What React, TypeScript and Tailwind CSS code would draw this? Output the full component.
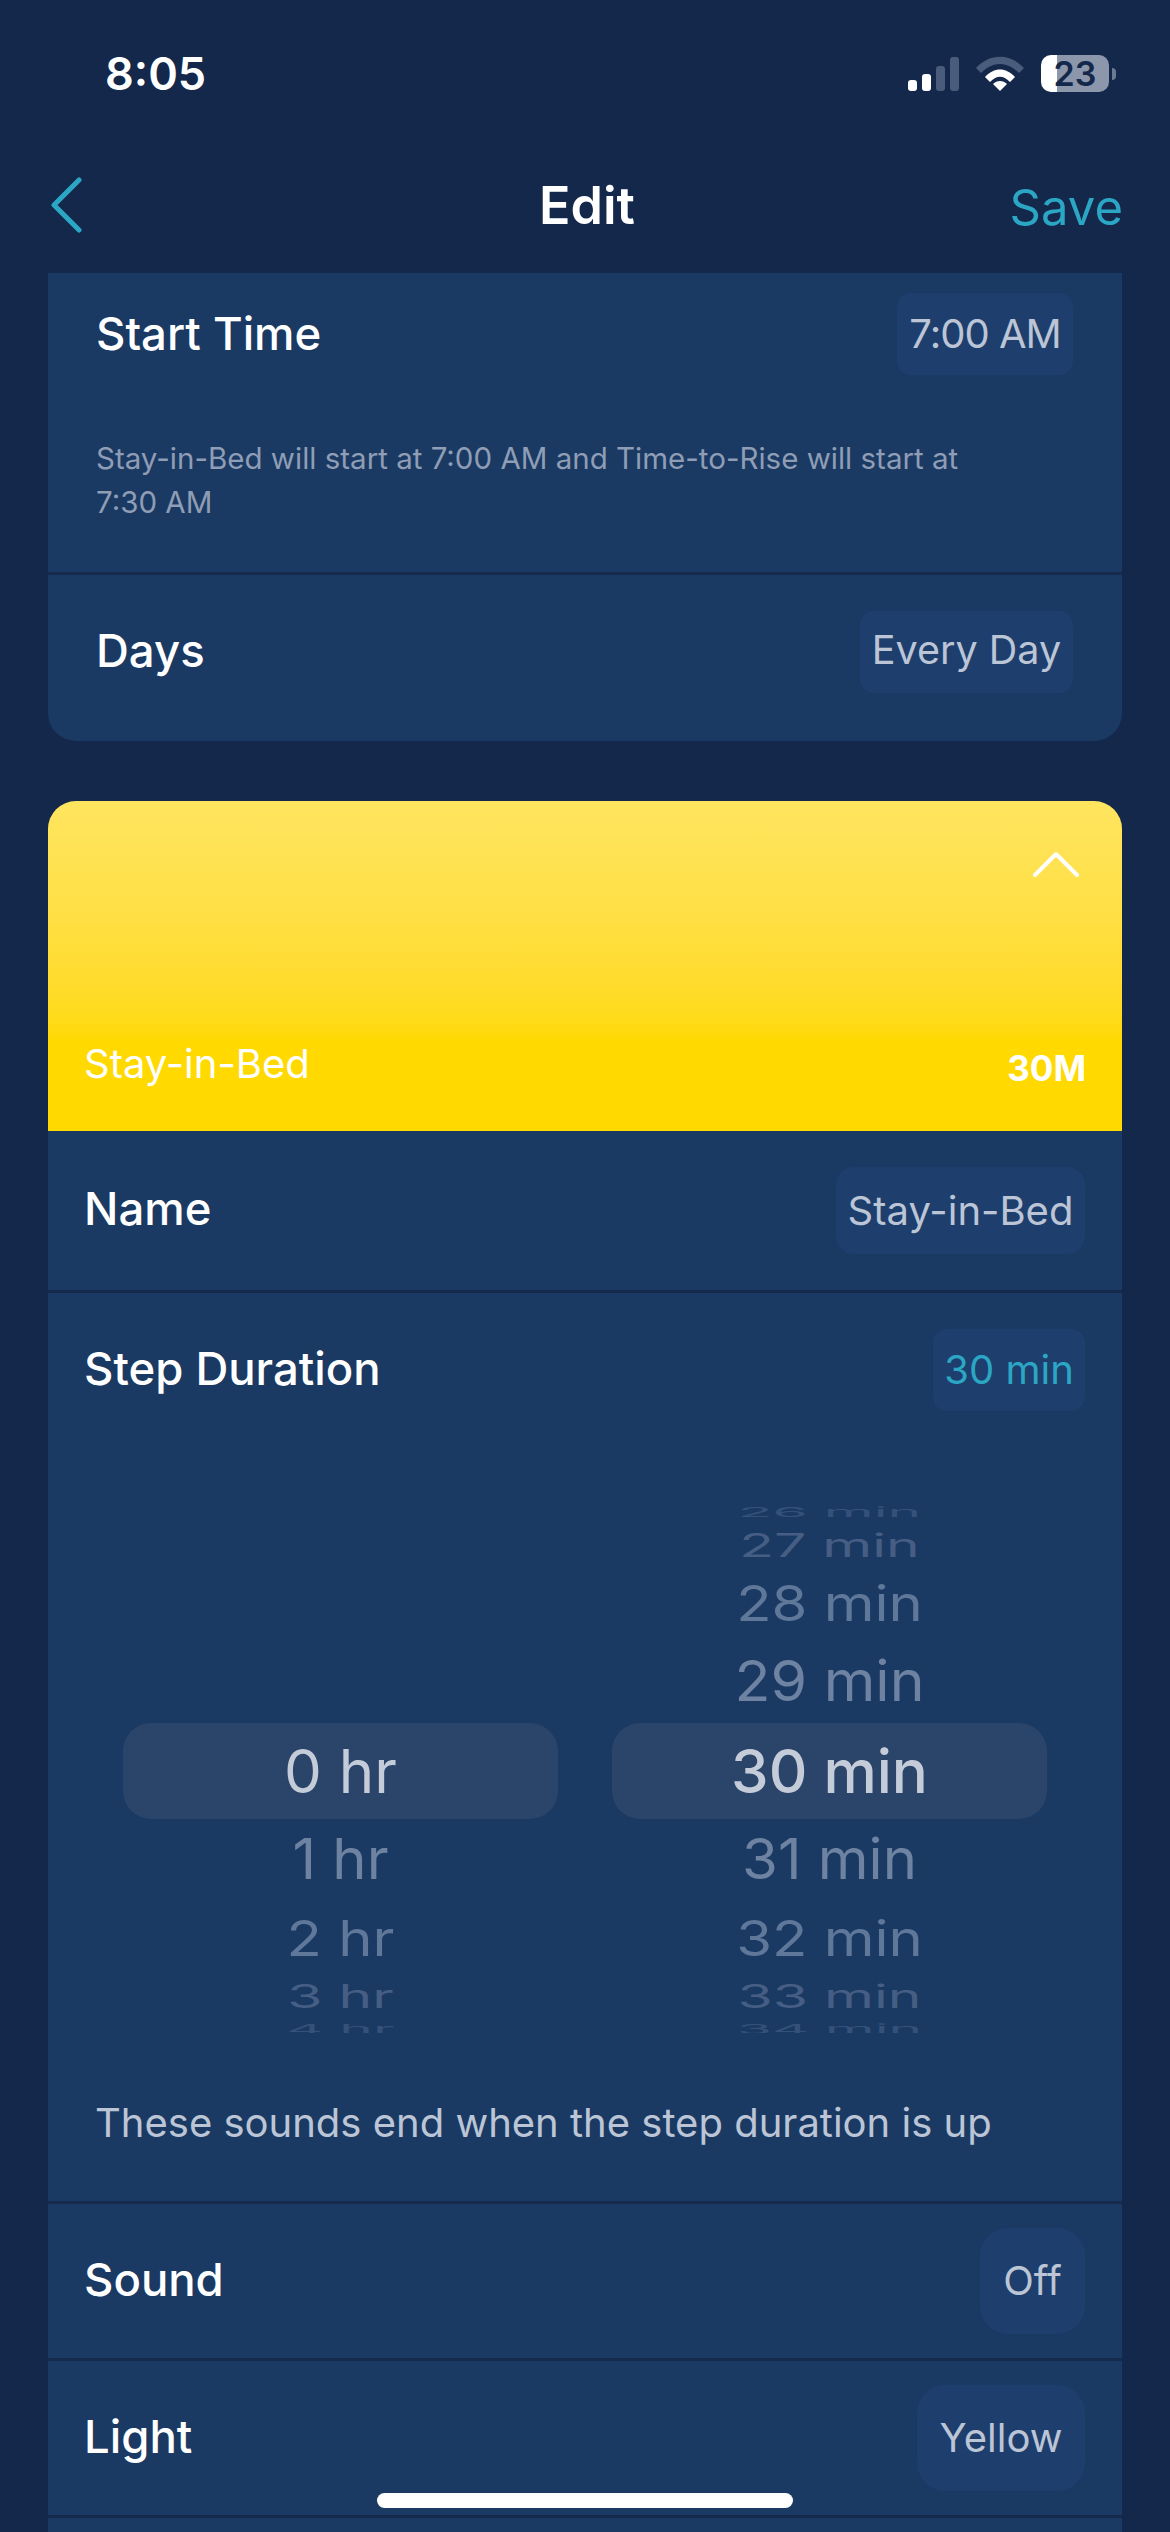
import React from "react";

const minutes = [
  { label: "26 min", row: "h-[26px] text-[57px] scale-y-[0.24] text-[#35517a]" },
  { label: "27 min", row: "h-[40px] text-[57px] scale-y-[0.56] text-[#465e83]" },
  { label: "28 min", row: "h-[76px] text-[58px] scale-y-[0.85] text-[#5f7799]" },
  { label: "29 min", row: "h-[82px] pb-[3px] text-[59px] scale-y-[0.96] text-[#6e83a2]" },
  { label: "30 min", row: "h-[96px] text-[60px] rounded-[28px] bg-[#2b4469] font-medium text-[#c5ccd9]" },
  { label: "31 min", row: "h-[80px] text-[58px] scale-y-[0.97] text-[#6e83a2]" },
  { label: "32 min", row: "h-[78px] text-[58px] scale-y-[0.85] text-[#5f7799]" },
  { label: "33 min", row: "h-[38px] text-[57px] scale-y-[0.56] text-[#465e83]" },
  { label: "34 min", row: "h-[28px] text-[57px] scale-y-[0.24] text-[#35517a]" },
];

const hours = [
  { label: "0 hr", row: "h-[96px] text-[60px] rounded-[28px] bg-[#2b4469] text-[#c5ccd9]" },
  { label: "1 hr", row: "h-[80px] text-[58px] scale-y-[0.97] text-[#6e83a2]" },
  { label: "2 hr", row: "h-[78px] text-[58px] scale-y-[0.85] text-[#5f7799]" },
  { label: "3 hr", row: "h-[38px] text-[57px] scale-y-[0.56] text-[#465e83]" },
  { label: "4 hr", row: "h-[28px] text-[57px] scale-y-[0.24] text-[#35517a]" },
];

function StatusIcons() {
  return (
    <div className="flex items-center">
      <svg width="51" height="34" viewBox="0 0 51 34" className="mr-[17px]">
        <rect x="0" y="23" width="9" height="11" rx="3" fill="#fff" />
        <rect x="14" y="17" width="9" height="17" rx="3" fill="#fff" />
        <rect x="28" y="9" width="9" height="25" rx="3" fill="#4a5c7b" />
        <rect x="42" y="0" width="9" height="34" rx="3" fill="#4a5c7b" />
      </svg>
      <svg width="48" height="35" viewBox="0 0 48 35" className="mr-[17px]">
        <path d="M0 12 C14 -3 34 -3 48 12 L43 17 C31 5 17 5 5 17 Z" fill="#4a5c7b" />
        <path d="M9 21 C18 11 30 11 39 21 L34 26 C27 19 21 19 14 26 Z" fill="#fff" />
        <path d="M17 28 C21 24 27 24 31 28 L24 35 Z" fill="#fff" />
      </svg>
      <div className="flex h-[37px] w-[68px]">
        <div className="w-[16px] rounded-l-[10px] bg-white" />
        <div className="flex-1 rounded-r-[10px] bg-[#8c97ab]" />
      </div>
      <span className="-ml-[68px] w-[68px] text-center text-[34px] font-semibold leading-[37px] text-[#14284b]">23</span>
      <div className="ml-[3px] h-[12px] w-[4px] rounded-r-full bg-[#6c7a92]" />
    </div>
  );
}

function Pill({ children, className }: { children: React.ReactNode; className: string }) {
  return (
    <div className={`flex items-center justify-center rounded-[14px] bg-[#1e3f6d] text-[#bcc5d6] ${className}`}>
      {children}
    </div>
  );
}

function Label({ children }: { children: React.ReactNode }) {
  return <span className="pb-[2px] text-[45.5px] font-medium">{children}</span>;
}

function Divider() {
  return <div className="h-[3px] bg-[#162a4e]" />;
}

function Wheel({ items, className }: { items: { label: string; row: string }[]; className?: string }) {
  return (
    <div className={`flex flex-1 flex-col ${className ?? ""}`}>
      {items.map((item) => (
        <div key={item.label} className={`flex shrink-0 items-center justify-center leading-none ${item.row}`}>
          {item.label}
        </div>
      ))}
    </div>
  );
}

export default function App() {
  return (
    <div className="relative h-[2532px] w-[1170px] overflow-hidden bg-[#14284b] font-['Inter',sans-serif] text-white">
      {/* status bar */}
      <div className="flex h-[148px] items-start justify-between pl-[105px] pr-[54px] pt-[55px]">
        <span className="text-[45px] font-semibold leading-[38px]">8:05</span>
        <StatusIcons />
      </div>

      {/* nav */}
      <div className="grid h-[125px] grid-cols-3 items-start pl-[50px] pr-[47px] pt-[29px]">
        <svg width="36" height="58" viewBox="0 0 36 58" fill="none">
          <path d="M31 4 L6 29 L31 54" stroke="#2ba6c4" strokeWidth="5" strokeLinecap="round" strokeLinejoin="round" transform="translate(-2 -1)" />
        </svg>
        <span className="pl-[1px] text-center text-[52px] font-semibold leading-[58px]">Edit</span>
        <span className="pt-[2px] text-right text-[49px] leading-[58px] text-[#2ba6c4]">Save</span>
      </div>

      <div className="mx-[48px]">
        <div className="rounded-b-[28px] bg-[#1a3a64]">
          <div className="pl-[48px] pr-[49px] pt-[20px]">
            <div className="flex items-center justify-between">
              <span className="text-[45.5px] font-medium">Start Time</span>
              <Pill className="h-[82px] w-[176px] text-[40px] tracking-[-1px]">7:00 AM</Pill>
            </div>
            <p className="mt-[61px] pb-[48px] text-[29.5px] leading-[44px] text-[#8f9db5]">
              Stay-in-Bed will start at 7:00 AM and Time-to-Rise will start at
              <br />
              7:30 AM
            </p>
          </div>
          <Divider />
          <div className="flex items-center justify-between pb-[48px] pl-[48px] pr-[49px] pt-[36px]">
            <Label>Days</Label>
            <Pill className="h-[82px] w-[213px] pb-[2px] text-[39.5px]">Every Day</Pill>
          </div>
        </div>

        <div className="mt-[60px] overflow-hidden rounded-t-[28px] bg-[#1a3a64]">
          <div className="flex h-[330px] flex-col justify-between bg-linear-to-b from-[#ffe55f] to-[#ffd900] to-[73%] px-[36px] pb-[43px] pt-[50px]">
            <div className="flex justify-end pr-[7px]">
              <svg width="46" height="26" viewBox="0 0 46 26" fill="none">
                <path d="M2 24 L23 3 L44 24" stroke="#fff" strokeWidth="4" strokeLinecap="round" strokeLinejoin="round" />
              </svg>
            </div>
            <div className="flex items-end justify-between">
              <span className="text-[40px] leading-[48px]">Stay-in-Bed</span>
              <span className="text-[35px] font-bold leading-[40px]">30M</span>
            </div>
          </div>

          <div className="flex h-[159px] items-center justify-between pl-[36px] pr-[37px]">
            <Label>Name</Label>
            <Pill className="h-[87px] w-[249px] rounded-[18px] text-[40px]">Stay-in-Bed</Pill>
          </div>
          <Divider />

          <div className="pb-[48px] pt-[36px]">
            <div className="flex items-center justify-between pl-[36px] pr-[37px]">
              <Label>Step Duration</Label>
              <Pill className="h-[82px] w-[152px] text-[40px] !text-[#2ba6c4]">30 min</Pill>
            </div>
            <div className="mt-[95px] flex h-[527px] gap-[54px] overflow-hidden px-[75px]">
              <Wheel items={hours} className="pt-[217px]" />
              <Wheel items={minutes} className="-mt-[7px]" />
            </div>
            <p className="mt-[60px] pl-[47px] text-[40px] leading-[60px] text-[#bcc5d6]">
              These sounds end when the step duration is up
            </p>
          </div>
          <Divider />

          <div className="flex h-[154px] items-center justify-between pl-[36px] pr-[37px]">
            <Label>Sound</Label>
            <Pill className="h-[106px] w-[105px] rounded-[28px] text-[40px]">Off</Pill>
          </div>
          <Divider />

          <div className="flex h-[154px] items-center justify-between pl-[36px] pr-[37px]">
            <Label>Light</Label>
            <Pill className="h-[106px] w-[168px] rounded-[28px] text-[40px]">Yellow</Pill>
          </div>
          <Divider />
          <div className="h-[40px]" />
        </div>
      </div>

      {/* home indicator */}
      <div className="absolute left-[377px] top-[2493px] h-[15px] w-[416px] rounded-full bg-white" />
    </div>
  );
}
